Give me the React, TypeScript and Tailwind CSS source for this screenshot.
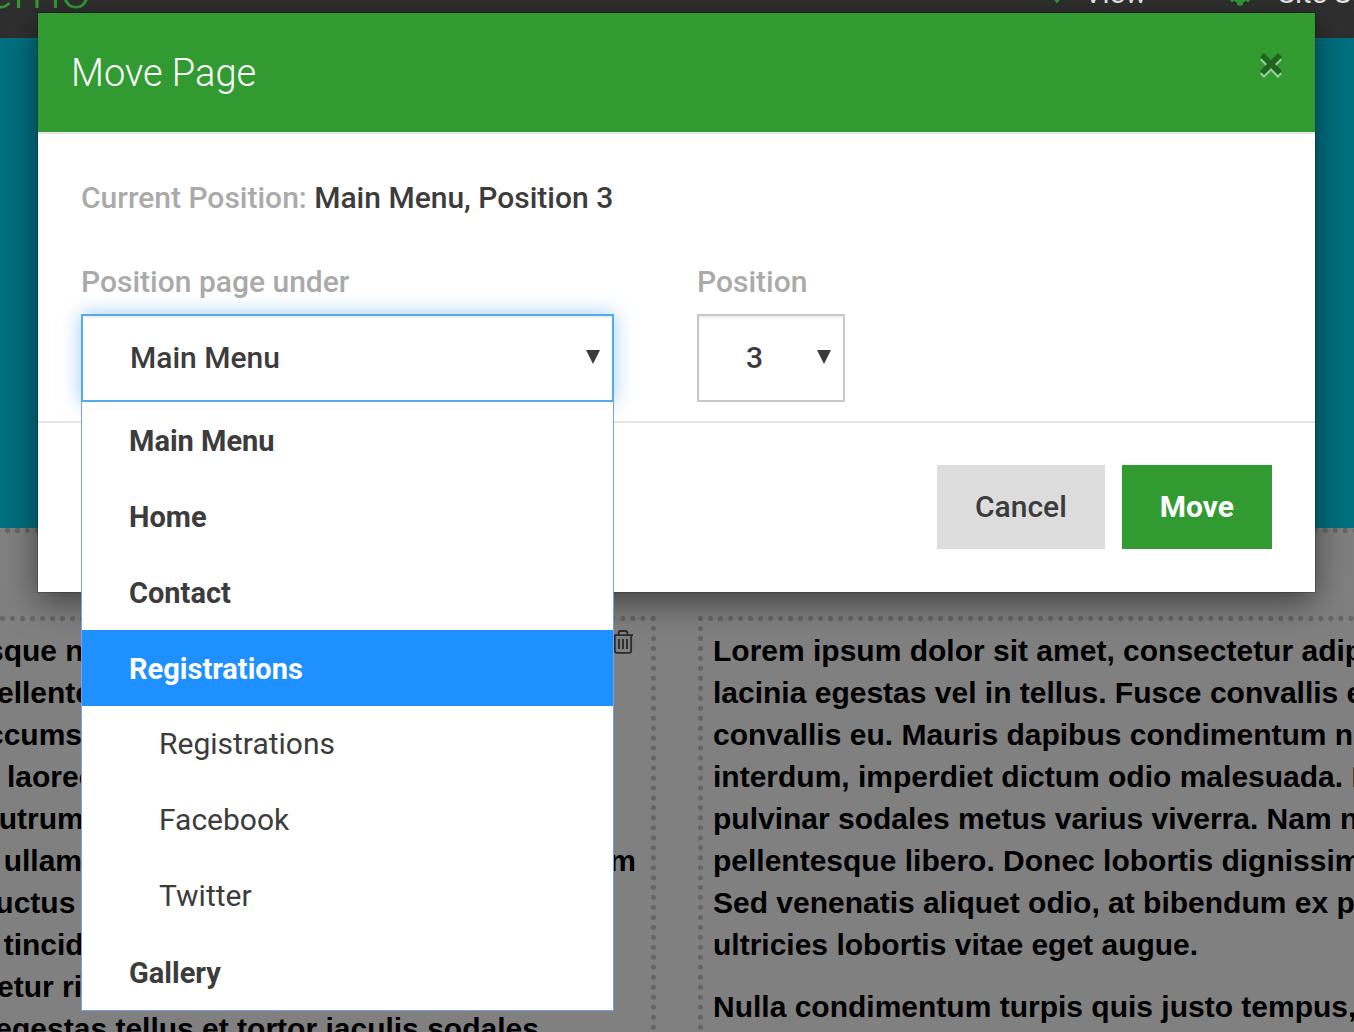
import React from "react";
import { FaCog, FaMapMarker } from "react-icons/fa";

const pages = [
  { label: "Main Menu", nested: false },
  { label: "Home", nested: false },
  { label: "Contact", nested: false },
  { label: "Registrations", nested: false, active: true },
  { label: "Registrations", nested: true },
  { label: "Facebook", nested: true },
  { label: "Twitter", nested: true },
  { label: "Gallery", nested: false },
];

const leftLines = [
  ["sque n"],
  ["tellente"],
  ["ccums"],
  ["r laoree"],
  ["rutrum"],
  ["i ullamc", "m"],
  ["luctus e"],
  [". tincid"],
  ["tetur rid"],
  ["\u00a0egestas tellus et tortor iaculis sodales"],
];

const rightLines = [
  "Lorem ipsum dolor sit amet, consectetur adipiscing",
  "lacinia egestas vel in tellus. Fusce convallis eros",
  "convallis eu. Mauris dapibus condimentum nulla",
  "interdum, imperdiet dictum odio malesuada. In",
  "pulvinar sodales metus varius viverra. Nam nec",
  "pellentesque libero. Donec lobortis dignissim",
  "Sed venenatis aliquet odio, at bibendum ex porta",
  "ultricies lobortis vitae eget augue.",
];

function TrashIcon() {
  return (
    <svg viewBox="0 0 20 24" className="h-6 w-5" fill="none" stroke="#2b2b2b" strokeWidth="1.8" aria-hidden="true">
      <path d="M0 5.2h20M5.6 5V3q0-2 2-2h4.8q2 0 2 2v2M1.8 5.2v15.6q0 2 2 2h12.4q2 0 2-2V5.2M6 9v10M10 9v10M14 9v10" />
    </svg>
  );
}

function Arrow() {
  return (
    <svg viewBox="0 0 14 14" className="pointer-events-none absolute right-[14px] top-9 size-[14px]" aria-hidden="true">
      <path d="M0 0h14L7 14z" fill="#3c3c3c" />
    </svg>
  );
}

function SitePage() {
  return (
    <div className="flex h-full flex-col overflow-hidden">
      <header className="flex h-[38px] shrink-0 items-start justify-between overflow-hidden bg-[#2f2f2f]">
        <span className="-ml-[15px] -mt-[40px] text-[54px] font-light leading-[60px] text-[#319b31]">emo</span>
        <nav className="-mt-[26px] flex text-[29px] leading-[38px] text-[#e6e6e6]">
          <a href="#view" className="flex items-center gap-[15px]">
            <FaMapMarker className="mb-1 size-6 text-[#319b31]" />
            View
          </a>
          <a href="#settings" className="ml-[81px] -mr-[86px] flex items-center gap-[26px] whitespace-nowrap">
            <FaCog className="mt-[2px] size-6 text-[#319b31]" />
            Site Settings
          </a>
        </nav>
      </header>
      <div className="h-[490px] shrink-0 bg-[#00707f]" />
      <main className="flex min-h-0 grow flex-col overflow-hidden bg-[#808080] font-['Liberation_Sans',sans-serif] text-[30px] font-bold leading-[42px] text-black">
        <div className="-mx-[5px] border-t-[5px] border-dotted border-[#656565]" />
        <div className="mt-[83px] flex grow gap-[42px]">
          <section className="relative -ml-[10px] w-[666px] shrink-0 border-[5px] border-b-0 border-dotted border-[#656565] pt-[9px]">
            <div className="absolute right-[18px] top-[9px]">
              <TrashIcon />
            </div>
            {leftLines.map((parts) => (
              <p key={parts[0]} className="-ml-[8px] mr-[15px] flex justify-between whitespace-nowrap">
                {parts.map((part) => (
                  <span key={part}>{part}</span>
                ))}
              </p>
            ))}
          </section>
          <section className="grow border-[5px] border-b-0 border-r-0 border-dotted border-[#656565] pl-[10px] pt-[9px]">
            {rightLines.map((line) => (
              <p key={line} className="w-0 whitespace-nowrap">
                {line}
              </p>
            ))}
            <p className="mt-5 w-0 whitespace-nowrap">Nulla condimentum turpis quis justo tempus, at</p>
          </section>
        </div>
      </main>
    </div>
  );
}

export default function App() {
  return (
    <div className="relative h-screen overflow-hidden font-['Roboto',sans-serif]">
      <SitePage />
      <div
        role="dialog"
        aria-labelledby="dialog-title"
        className="absolute left-[38px] right-[39px] top-[13px] bg-white text-[30px] font-medium leading-[38px] text-[#3c3c3c] shadow-[0_0_0_1px_rgba(0,0,0,0.2),0_10px_32px_rgba(0,0,0,0.5)]"
      >
        <div className="flex items-start justify-between border-b-2 border-[#e5e5e5] bg-[#319b31] bg-clip-padding px-[33px] pb-[34px] pt-[35px]">
          <h1 id="dialog-title" className="text-[38px] font-light leading-[50px] text-white">
            Move Page
          </h1>
          <button type="button" aria-label="Close" className="mt-[5px]">
            <svg viewBox="0 0 22 25" className="h-[25px] w-[22px]" aria-hidden="true">
              <path d="M0 7 4 3l7 7 7-7 4 4-7 7 7 7-4 4-7-7-7 7-4-4 7-7z" fill="#98cd98" />
              <path d="M0 4 4 0l7 7 7-7 4 4-7 7 7 7-4 4-7-7-7 7-4-4 7-7z" fill="#1f641f" />
            </svg>
          </button>
        </div>
        <div className="border-b-2 border-[#e5e5e5] px-[43px] pb-[19px] pt-[45px]">
          <p>
            <span className="text-[#aaaaaa]">Current Position:</span> Main Menu, Position 3
          </p>
          <div className="mt-[46px] grid grid-cols-2 gap-x-[83px] pr-[42px]">
            <div>
              <label htmlFor="parent" className="block text-[#aaaaaa]">
                Position page under
              </label>
              <div className="relative mt-[13px]">
                <select
                  id="parent"
                  className="h-[88px] w-full appearance-none border-2 border-[#56aaea] bg-white pl-[47px] pr-10 shadow-[inset_0_2px_2px_rgba(0,0,0,0.07),0_0_18px_rgba(86,170,234,0.6)] outline-none"
                >
                  <option>Main Menu</option>
                </select>
                <Arrow />
                <ul
                  role="listbox"
                  aria-label="Position page under"
                  className="absolute inset-x-0 top-full z-10 border border-t-0 border-[#7b9fdf] bg-white"
                >
                  {pages.map((page) => (
                    <li
                      key={page.label + String(page.nested)}
                      role="option"
                      aria-selected={!!page.active}
                      className={
                        page.nested
                          ? "py-[19px] pl-[77px] font-normal"
                          : page.active
                            ? "bg-[#1e90ff] pb-[18px] pl-[47px] pt-5 text-[29px] font-bold text-white"
                            : "pb-[18px] pl-[47px] pt-5 text-[29px] font-bold"
                      }
                    >
                      {page.label}
                    </li>
                  ))}
                </ul>
              </div>
            </div>
            <div>
              <label htmlFor="position" className="block text-[#aaaaaa]">
                Position
              </label>
              <div className="relative mt-[13px] w-[148px]">
                <select
                  id="position"
                  className="h-[88px] w-full appearance-none border-2 border-[#c8c8c8] bg-white pl-[47px] pr-10 shadow-[inset_0_2px_2px_rgba(0,0,0,0.07)] outline-none"
                >
                  <option>3</option>
                </select>
                <Arrow />
              </div>
            </div>
          </div>
        </div>
        <div className="flex justify-end gap-[17px] px-[43px] pb-[43px] pt-[42px]">
          <button type="button" className="bg-[#dddddd] px-[38px] py-[23px]">
            Cancel
          </button>
          <button type="button" className="bg-[#319b31] px-[38px] py-[23px] font-bold text-white">
            Move
          </button>
        </div>
      </div>
    </div>
  );
}
